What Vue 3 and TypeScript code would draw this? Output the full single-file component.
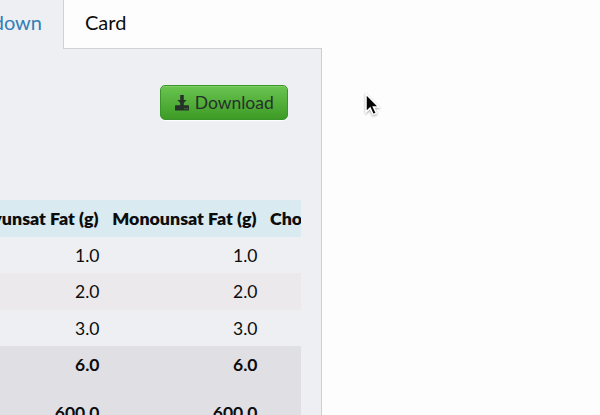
<script setup lang="ts">
interface Row {
  values: string[]
  kind: string
}

const headers: string[] = ['Polyunsat Fat (g)', 'Monounsat Fat (g)', 'Cholesterol (mg)']

const rows: Row[] = [
  { values: ['1.0', '1.0'], kind: 'plain' },
  { values: ['2.0', '2.0'], kind: 'striped' },
  { values: ['3.0', '3.0'], kind: 'plain' },
  { values: ['6.0', '6.0'], kind: 'total' },
  { values: ['600.0', '600.0'], kind: 'total goal' },
]
</script>

<template>
  <div class="screen">
    <nav class="tabs">
      <a class="tab active"><span>Breakdown</span></a>
      <a class="tab card">Card</a>
    </nav>
    <section class="panel">
      <div class="toolbar">
        <button class="download" type="button">
          <svg width="14" height="16" viewBox="0 0 14 16" aria-hidden="true">
            <path d="M5.2 0h3.6v5h2.8L7 9.8 2.4 5h2.8z" />
            <path d="M5.2 7h3.6v4H5.2z" />
            <path d="M.5 10.3h13q.5 0 .5.6v4q0 .6-.5.6H.5q-.5 0-.5-.6v-4q0-.6.5-.6z" />
            <path class="lights" d="M9.4 13.2h1v1h-1zM11.6 13.2h1v1h-1z" />
          </svg>
          <span>Download</span>
        </button>
      </div>
      <div class="table">
        <div class="row head">
          <div v-for="header in headers" :key="header" class="cell"><span>{{ header }}</span></div>
        </div>
        <div v-for="(row, index) in rows" :key="index" class="row" :class="row.kind">
          <div v-for="(value, column) in row.values" :key="column" class="cell">{{ value }}</div>
        </div>
      </div>
    </section>
    <svg class="pointer" width="18" height="28" viewBox="0 0 18 28" aria-hidden="true">
      <path d="M3 3v18l4.1-3.9 3 6.5 3.3-1.5-3-6.2h5.4z" />
    </svg>
  </div>
</template>

<style>
body {
  overflow: hidden;
}
</style>

<style scoped>
.screen {
  position: relative;
  display: flex;
  flex-direction: column;
  width: 600px;
  height: 415px;
  overflow: hidden;
  background: #fefdfe;
  color: #0c0c0c;
  font-family: Lato, sans-serif;
  font-size: 17.5px;
}

.tabs {
  display: flex;
  flex: 0 0 49px;
}

.tab {
  box-sizing: border-box;
  height: 49px;
  font-size: 20px;
  line-height: 44px;
}

.tab.active {
  display: flex;
  justify-content: flex-end;
  width: 64px;
  padding-right: 21px;
  border-right: 1px solid #d1d1d3;
  background: #edeff3;
  color: #347eb7;
}

.card {
  width: 258px;
  padding-left: 21px;
  border-bottom: 1px solid #d1d1d3;
}

.panel {
  box-sizing: border-box;
  display: flex;
  flex: 1;
  flex-direction: column;
  width: 322px;
  min-height: 0;
  border-right: 1px solid #cfcfd1;
  background: #edeff3;
}

.toolbar {
  display: flex;
  flex: 0 0 151.4px;
  align-items: flex-start;
  justify-content: flex-end;
  box-sizing: border-box;
  padding: 36px 33px 0 0;
}

.download {
  display: flex;
  align-items: center;
  justify-content: center;
  gap: 5.5px;
  box-sizing: border-box;
  width: 128px;
  height: 35px;
  padding: 0 0 0 1px;
  border: 1px solid #3b942b;
  border-radius: 5px;
  background: linear-gradient(#69c450, #3d9b25);
  box-shadow: inset 0 1px #80d067, 0 1px 1px #fff;
  color: #26312a;
  font: 17.5px Lato, sans-serif;
}

.download svg {
  fill: #26312a;
}

.download .lights {
  fill: #55ad3e;
}

.table {
  flex: none;
  width: 301px;
  overflow: hidden;
}

.row {
  display: grid;
  grid-template-columns: 106px 158px 160px;
  box-sizing: border-box;
  height: 36.5px;
  line-height: 37px;
}

.cell {
  display: flex;
  justify-content: flex-end;
  padding-right: 6.5px;
  white-space: nowrap;
}

.head {
  height: 36.4px;
  background: #d9eaf1;
  font-size: 17.8px;
  font-weight: 800;
  line-height: 37px;
}

.head .cell {
  padding-right: 7.5px;
}

.head .cell:last-child {
  justify-content: flex-start;
  padding-left: 6px;
}

.striped {
  background: #ebe9ec;
}

.total {
  background: #e0dfe4;
  font-weight: 700;
}

.goal {
  height: 60px;
  line-height: 60px;
}

.pointer {
  position: absolute;
  top: 91px;
  left: 363px;
  fill: #050505;
  stroke: #fff;
  stroke-width: 1.5;
  filter: drop-shadow(0 1px 1px rgb(0 0 0 / 35%));
}
</style>
